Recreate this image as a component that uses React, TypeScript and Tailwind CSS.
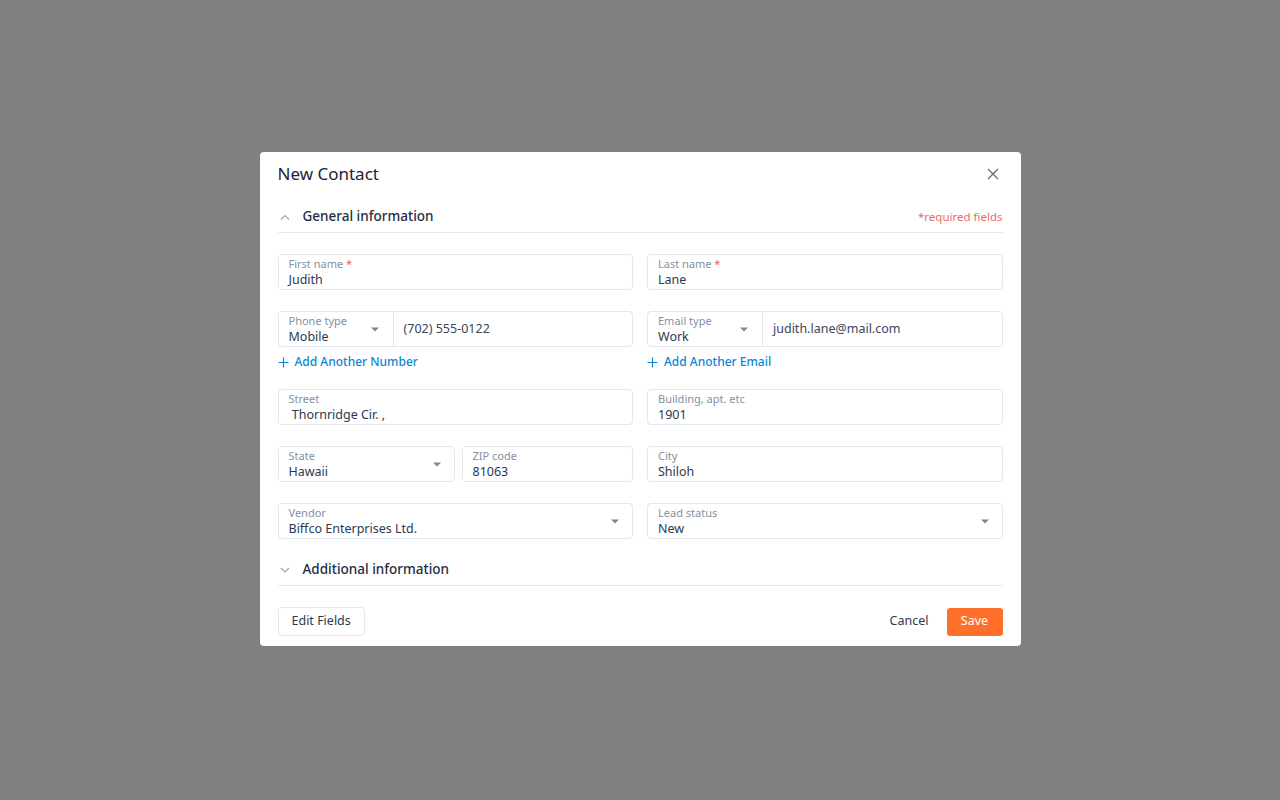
import { ReactNode } from "react";

const font = { fontFamily: '"Noto Sans", "Open Sans", sans-serif' };

function Caret() {
    return (
        <svg width="8" height="5" viewBox="0 0 8 5" className="shrink-0">
            <path d="M0 0.5 L8 0.5 L4 4.5 Z" fill="#7d8898" />
        </svg>
    );
}

function Field({ label, value, required, select, className = "" }: { label: string; value: string; required?: boolean; select?: boolean; className?: string }) {
    return (
        <div className={`h-9 border border-[#e3e8ef] rounded flex items-center px-[10px] ${className}`}>
            <div className="flex-1 min-w-0 flex flex-col pt-[1px]">
                <span className="text-[11px] leading-[14px] text-[#8590a2]">
                    {label}
                    {required && <span className="text-[#f15b5b]"> *</span>}
                </span>
                <span className="text-[12.5px] leading-[17px] text-[#2c3a4f] whitespace-pre">{value}</span>
            </div>
            {select && <div className="pr-[3px]"><Caret /></div>}
        </div>
    );
}

function Combo({ label, type, value }: { label: string; type: string; value: string }) {
    return (
        <div className="h-9 border border-[#e3e8ef] rounded flex">
            <div className="w-[115px] border-r border-[#e3e8ef] flex items-center px-[10px]">
                <div className="flex-1 flex flex-col pt-[1px]">
                    <span className="text-[11px] leading-[14px] text-[#8590a2]">{label}</span>
                    <span className="text-[12.5px] leading-[17px] text-[#2c3a4f]">{type}</span>
                </div>
                <div className="pr-[4px]"><Caret /></div>
            </div>
            <div className="flex-1 flex items-center px-[10px] text-[12.5px] text-[#3b4658]">{value}</div>
        </div>
    );
}

function AddLink({ children }: { children: ReactNode }) {
    return (
        <button className="mt-[7px] flex items-center gap-[6px] text-[12px] font-medium text-[#0c86d4] h-4">
            <svg width="11" height="11" viewBox="0 0 11 11">
                <path d="M5.5 0.5 V10.5 M0.5 5.5 H10.5" stroke="#0c86d4" strokeWidth="1.2" />
            </svg>
            {children}
        </button>
    );
}

function SectionHeader({ title, open, right }: { title: string; open: boolean; right?: ReactNode }) {
    return (
        <div className="flex items-center h-8 border-b border-[#e5eaf0]">
            <svg width="10" height="6" viewBox="0 0 10 6" className="ml-[2px] mr-[13px]">
                <path d={open ? "M1 5.5 L5 1.5 L9 5.5" : "M1 1 L5 5 L9 1"} stroke="#9aa4b2" strokeWidth="1.1" fill="none" />
            </svg>
            <span className="text-[13.5px] font-medium text-[#1f2d42] flex-1">{title}</span>
            {right}
        </div>
    );
}

export default function App() {
    return (
        <div className="min-h-screen bg-[#808080] flex items-center justify-center" style={font}>
            <div className="w-[761px] bg-white rounded-[4px] px-[18px] pt-[10px] pb-[10px] mt-[-2px]">
                <div className="flex items-center justify-between h-[24px]">
                    <h1 className="text-[17px] text-[#1c2433]">New Contact</h1>
                    <button className="mr-[4px]">
                        <svg width="12" height="12" viewBox="0 0 12 12">
                            <path d="M1 1 L11 11 M11 1 L1 11" stroke="#5f6f86" strokeWidth="1.4" />
                        </svg>
                    </button>
                </div>
                <div className="mt-[15px]">
                    <SectionHeader
                        title="General information"
                        open
                        right={<span className="text-[11.5px] text-[#f06767]">*required fields</span>}
                    />
                </div>
                <div className="grid grid-cols-2 gap-x-[14px] mt-[21px]">
                    <Field label="First name" value="Judith" required />
                    <Field label="Last name" value="Lane" required />
                </div>
                <div className="grid grid-cols-2 gap-x-[14px] mt-[21px]">
                    <div>
                        <Combo label="Phone type" type="Mobile" value="(702) 555-0122" />
                        <AddLink>Add Another Number</AddLink>
                    </div>
                    <div>
                        <Combo label="Email type" type="Work" value="judith.lane@mail.com" />
                        <AddLink>Add Another Email</AddLink>
                    </div>
                </div>
                <div className="grid grid-cols-2 gap-x-[14px] mt-[19px]">
                    <Field label="Street" value=" Thornridge Cir. ," />
                    <Field label="Building, apt. etc" value="1901" />
                </div>
                <div className="grid grid-cols-2 gap-x-[14px] mt-[21px]">
                    <div className="flex gap-[7px]">
                        <Field label="State" value="Hawaii" select className="w-[177px]" />
                        <Field label="ZIP code" value="81063" className="flex-1" />
                    </div>
                    <Field label="City" value="Shiloh" />
                </div>
                <div className="grid grid-cols-2 gap-x-[14px] mt-[21px]">
                    <Field label="Vendor" value="Biffco Enterprises Ltd." select />
                    <Field label="Lead status" value="New" select />
                </div>
                <div className="mt-[15px]">
                    <SectionHeader title="Additional information" open={false} />
                </div>
                <div className="flex items-center justify-between mt-[21px]">
                    <button className="h-[29px] px-[13px] border border-[#e3e8ef] rounded text-[12.5px] text-[#2c3a4f]">Edit Fields</button>
                    <div className="flex items-center gap-[18px]">
                        <button className="text-[12.5px] text-[#2c3a4f]">Cancel</button>
                        <button className="h-[28px] w-[56px] bg-[#ff6f2c] rounded-[3px] text-[12.5px] text-white">Save</button>
                    </div>
                </div>
            </div>
        </div>
    );
}
